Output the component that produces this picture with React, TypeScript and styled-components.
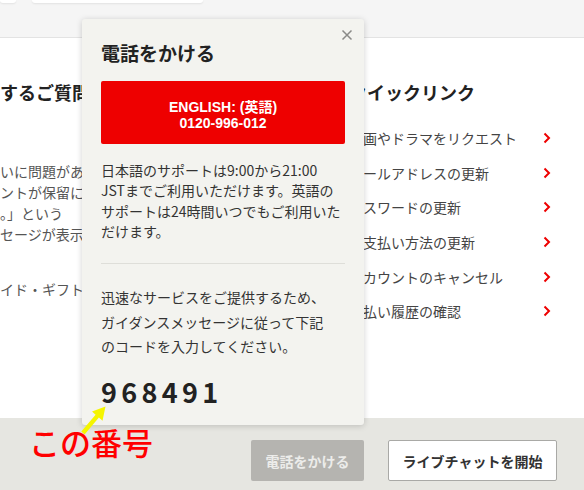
import React from "react";
import styled, { createGlobalStyle } from "styled-components";

const GlobalStyle = createGlobalStyle`
  html, body { margin: 0; padding: 0; }
  body {
    width: 584px;
    height: 490px;
    overflow: hidden;
    background: #fff;
    font-family: "Noto Sans CJK JP", "Noto Sans", sans-serif;
  }
`;

const Page = styled.div`
  position: relative;
  width: 584px;
  height: 490px;
  display: flex;
  flex-direction: column;
  overflow: hidden;
`;

const TopBar = styled.div`
  height: 37px;
  flex: none;
  background: #f5f5f5;
  border-bottom: 1px solid #e3e3e3;
  display: flex;
  align-items: flex-start;
  gap: 16px;
`;

const InputStub = styled.div<{ $w: number }>`
  width: ${(p) => p.$w}px;
  height: 3px;
  background: #fff;
  border-radius: 0 0 5px 5px;
  box-shadow: 0 1px 2px rgba(0, 0, 0, 0.08);
`;

const Main = styled.div`
  flex: 1;
  display: grid;
  grid-template-columns: 349px 1fr;
  padding-top: 41px;
  background: #fff;
  box-sizing: border-box;
`;

const Column = styled.div`
  display: flex;
  flex-direction: column;
  min-width: 0;
`;

const Heading = styled.h2`
  margin: 0;
  font-size: 18px;
  font-weight: 700;
  line-height: 26px;
  color: #222;
  white-space: nowrap;
`;

const LeftText = styled.p<{ $mt: number }>`
  margin: ${(p) => p.$mt}px 0 0;
  font-size: 14px;
  line-height: 21px;
  color: #555;
  white-space: nowrap;
`;

const LinkList = styled.ul`
  list-style: none;
  margin: 16px 0 0;
  padding: 0;
  width: 202px;
`;

const LinkRow = styled.li`
  height: 34.6px;
  display: flex;
  align-items: center;
  justify-content: space-between;
  font-size: 14px;
  color: #444;
  white-space: nowrap;
`;

const Footer = styled.div`
  height: 72px;
  flex: none;
  background: #e6e6e1;
  display: flex;
  justify-content: flex-end;
  align-items: flex-start;
  gap: 24px;
  padding: 22px 27px 0 0;
  box-sizing: border-box;
`;

const FooterButton = styled.button<{ $w: number; $disabled?: boolean }>`
  width: ${(p) => p.$w}px;
  height: 41px;
  border-radius: 2px;
  font-family: inherit;
  font-size: 14px;
  font-weight: 700;
  border: ${(p) => (p.$disabled ? "none" : "1px solid #a9a9a6")};
  background: ${(p) => (p.$disabled ? "#b5b4b0" : "#fff")};
  color: ${(p) => (p.$disabled ? "#ececea" : "#333")};
  padding: 0;
`;

const Popup = styled.div`
  position: absolute;
  left: 82px;
  top: 19px;
  width: 282px;
  height: 406px;
  box-sizing: border-box;
  padding: 22px 19px 0 19px;
  background: #f3f3ef;
  border-radius: 3px;
  box-shadow: 0 1px 6px rgba(0, 0, 0, 0.18);
  display: flex;
  flex-direction: column;
`;

const CloseButton = styled.button`
  position: absolute;
  top: 10px;
  right: 11px;
  width: 12px;
  height: 12px;
  padding: 0;
  border: none;
  background: transparent;
  display: flex;
`;

const Title = styled.h1`
  margin: 0;
  font-size: 19px;
  font-weight: 700;
  line-height: 24px;
  color: #222;
`;

const CallButton = styled.div`
  margin-top: 16px;
  height: 63px;
  background: #ee0000;
  border-radius: 2px;
  color: #fff;
  font-family: "Liberation Sans", "Noto Sans CJK JP", sans-serif;
  font-size: 14px;
  font-weight: 700;
  line-height: 16px;
  display: flex;
  flex-direction: column;
  align-items: center;
  justify-content: center;
  padding-top: 4px;
  box-sizing: border-box;
`;

const Para = styled.p<{ $mt: number; $lh: number }>`
  margin: ${(p) => p.$mt}px 0 0;
  font-size: 14px;
  line-height: ${(p) => p.$lh}px;
  color: #333;
  white-space: nowrap;
`;

const Divider = styled.hr`
  margin: 22px 0 0;
  border: none;
  height: 1px;
  background: #deded9;
`;

const Code = styled.div`
  margin-top: 17px;
  font-size: 27px;
  font-weight: 700;
  letter-spacing: 4.3px;
  line-height: 32px;
  color: #222;
`;

const ArrowMark = styled.svg`
  position: absolute;
  left: 75px;
  top: 400px;
  width: 40px;
  height: 40px;
`;

const Note = styled.div`
  position: absolute;
  left: 29px;
  top: 422px;
  font-size: 31px;
  font-weight: 500;
  line-height: 40px;
  color: #ff0000;
  white-space: nowrap;
`;

const Chevron = () => (
  <svg width="8" height="12" viewBox="0 0 8 12">
    <path d="M1.5 1.5 L6 6 L1.5 10.5" fill="none" stroke="#ee0000" strokeWidth="2" />
  </svg>
);

const links = [
  "映画やドラマをリクエスト",
  "メールアドレスの更新",
  "パスワードの更新",
  "お支払い方法の更新",
  "アカウントのキャンセル",
  "支払い履歴の確認",
];

export default function App() {
  return (
    <>
      <GlobalStyle />
      <Page>
        <TopBar>
          <InputStub $w={16} />
          <InputStub $w={171} />
        </TopBar>
        <Main>
          <Column>
            <Heading>するご質問</Heading>
            <LeftText $mt={56}>
              いに問題があ
              <br />
              ントが保留に
              <br />
              。」という
              <br />
              セージが表示
            </LeftText>
            <LeftText $mt={34}>イド・ギフト</LeftText>
          </Column>
          <Column>
            <Heading>クイックリンク</Heading>
            <LinkList>
              {links.map((l) => (
                <LinkRow key={l}>
                  <span>{l}</span>
                  <Chevron />
                </LinkRow>
              ))}
            </LinkList>
          </Column>
        </Main>
        <Footer>
          <FooterButton $w={113} $disabled>
            電話をかける
          </FooterButton>
          <FooterButton $w={169}>ライブチャットを開始</FooterButton>
        </Footer>

        <Popup>
          <CloseButton aria-label="close">
            <svg width="12" height="12" viewBox="0 0 12 12">
              <path d="M1.5 1.5 L10.5 10.5 M10.5 1.5 L1.5 10.5" stroke="#8a8a88" strokeWidth="1.5" />
            </svg>
          </CloseButton>
          <Title>電話をかける</Title>
          <CallButton>
            <span>ENGLISH: (英語)</span>
            <span>0120-996-012</span>
          </CallButton>
          <Para $mt={16} $lh={20.3}>
            日本語のサポートは9:00から21:00
            <br />
            JSTまでご利用いただけます。英語の
            <br />
            サポートは24時間いつでもご利用いた
            <br />
            だけます。
          </Para>
          <Divider />
          <Para $mt={21} $lh={24.5}>
            迅速なサービスをご提供するため、
            <br />
            ガイダンスメッセージに従って下記
            <br />
            のコードを入力してください。
          </Para>
          <Code>968491</Code>
        </Popup>

        <ArrowMark viewBox="0 0 40 40">
          <polygon
            points="30.5,6.5 27.5,20.8 23.9,17.6 9.6,34.5 6.3,31.6 20.6,14.7 17,11.6"
            fill="#f5f500"
          />
        </ArrowMark>
        <Note>この番号</Note>
      </Page>
    </>
  );
}
